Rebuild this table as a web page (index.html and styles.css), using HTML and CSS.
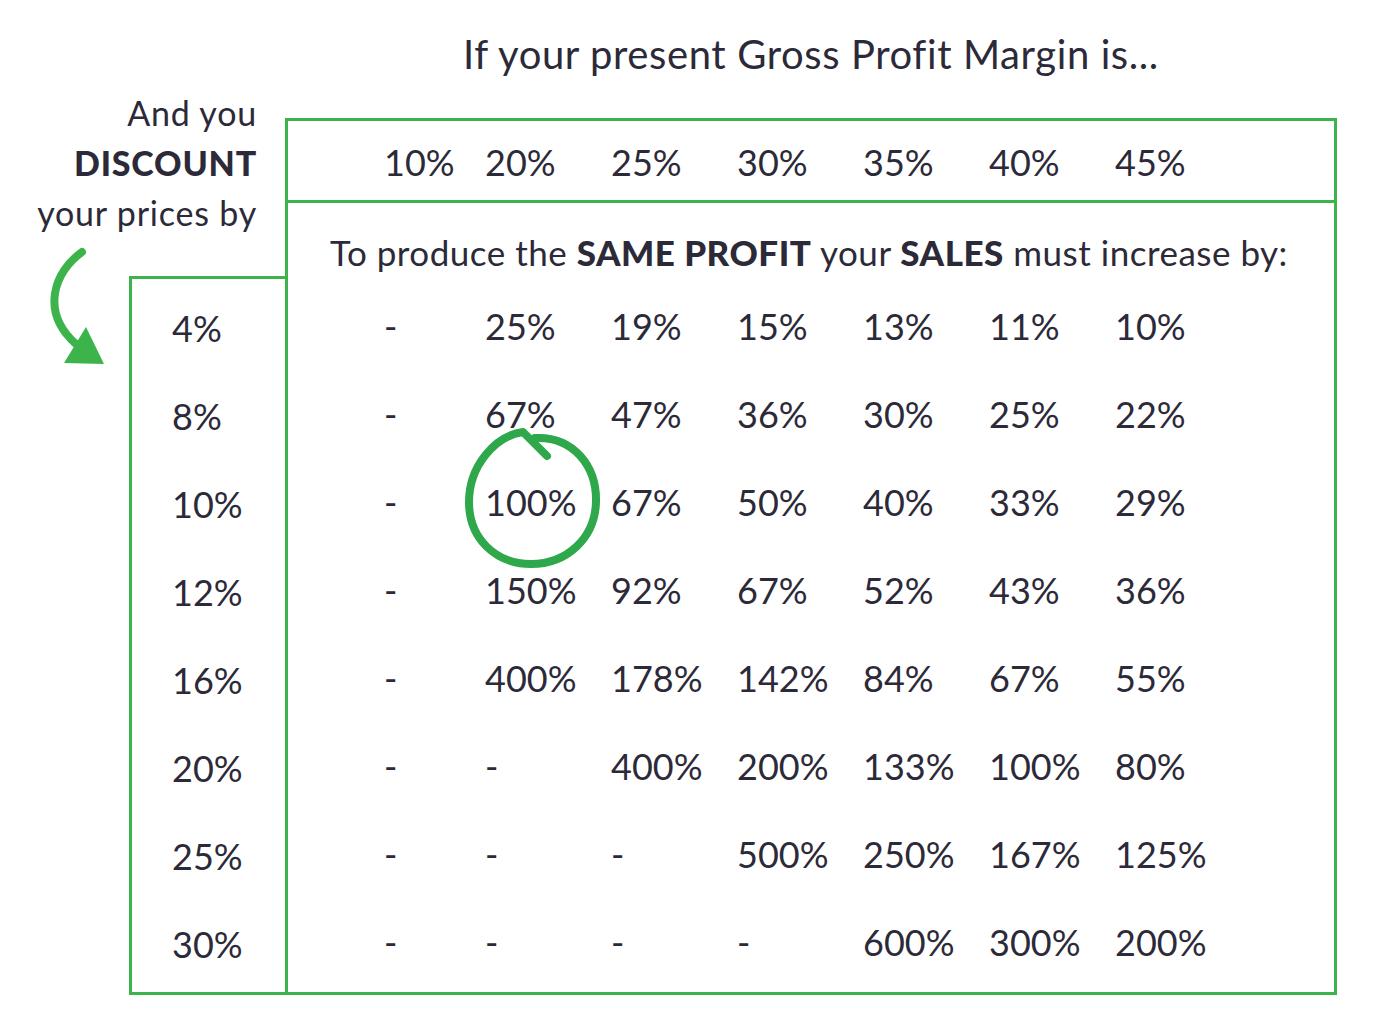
FILE: index.html
```html
<!DOCTYPE html>
<html lang="en">

<head>
    <meta charset="UTF-8">
    <title>Discount vs Sales Increase</title>
    <link rel="stylesheet" href="styles.css">
</head>

<body>
    <div class="sheet">
        <div class="side">
            <div class="side-label">
                <div>And you</div>
                <div class="strong">DISCOUNT</div>
                <div>your prices by</div>
            </div>
            <div class="side-body">
                <svg class="arrow" width="129" height="124" viewBox="0 0 129 124">
                    <path d="M82 6 C 54 26, 40 66, 76 98" fill="none" stroke="#3cb44b" stroke-width="8" stroke-linecap="round" />
                    <polygon points="64,117 104,118 86,81" fill="#3cb44b" />
                </svg>
                <div class="discount-box">
                    <div class="discount-row">4%</div>
                    <div class="discount-row">8%</div>
                    <div class="discount-row">10%</div>
                    <div class="discount-row">12%</div>
                    <div class="discount-row">16%</div>
                    <div class="discount-row">20%</div>
                    <div class="discount-row">25%</div>
                    <div class="discount-row">30%</div>
                </div>
            </div>
        </div>

        <div class="main">
            <div class="title">If your present Gross Profit Margin is...</div>
            <div class="table-box">
                <div class="margin-row cols">
                    <span>10%</span><span>20%</span><span>25%</span><span>30%</span><span>35%</span><span>40%</span><span>45%</span>
                </div>
                <div class="note">To produce the <b>SAME PROFIT</b> your <b>SALES</b> must increase by:</div>
                <div class="data">
                    <div class="cols"><span>-</span><span>25%</span><span>19%</span><span>15%</span><span>13%</span><span>11%</span><span>10%</span></div>
                    <div class="cols"><span>-</span><span>67%</span><span>47%</span><span>36%</span><span>30%</span><span>25%</span><span>22%</span></div>
                    <div class="cols">
                        <span>-</span>
                        <span class="circled">100%
                            <svg class="ring" width="150" height="150" viewBox="0 0 150 150">
                                <path d="M74 16 C 112 14, 136 44, 135 80 C 134 116, 106 142, 70 142 C 34 142, 8 116, 8 80 C 8 44, 34 14, 62 10 L 86 34" fill="none" stroke="#2ea84a" stroke-width="8" stroke-linecap="round" stroke-linejoin="round" />
                            </svg>
                        </span>
                        <span>67%</span><span>50%</span><span>40%</span><span>33%</span><span>29%</span>
                    </div>
                    <div class="cols"><span>-</span><span>150%</span><span>92%</span><span>67%</span><span>52%</span><span>43%</span><span>36%</span></div>
                    <div class="cols"><span>-</span><span>400%</span><span>178%</span><span>142%</span><span>84%</span><span>67%</span><span>55%</span></div>
                    <div class="cols"><span>-</span><span>-</span><span>400%</span><span>200%</span><span>133%</span><span>100%</span><span>80%</span></div>
                    <div class="cols"><span>-</span><span>-</span><span>-</span><span>500%</span><span>250%</span><span>167%</span><span>125%</span></div>
                    <div class="cols"><span>-</span><span>-</span><span>-</span><span>-</span><span>600%</span><span>300%</span><span>200%</span></div>
                </div>
            </div>
        </div>
    </div>
</body>

</html>
```

FILE: styles.css
```css
body {
    margin: 0;
    background-color: #ffffff;
    font-family: Lato, "Open Sans", sans-serif;
    color: #2c2a38;
}

.sheet {
    display: flex;
    width: 1400px;
    height: 1027px;
}

/* left column: label, arrow and discount list */
.side {
    width: 285px;
    flex: none;
    padding-top: 88px;
    box-sizing: border-box;
}

.side-label {
    text-align: right;
    padding-right: 28px;
    font-size: 34px;
    line-height: 50px;
    letter-spacing: 0.8px;
}

.side-label .strong {
    font-weight: 900;
    letter-spacing: 0.8px;
}

.side-body {
    display: flex;
    margin-top: 38px;
}

.arrow {
    display: block;
    flex: none;
    margin-top: -30px;
}

.discount-box {
    width: 156px;
    border: 3px solid #3cb44b;
    border-right: none;
    padding: 5px 0 4px;
    box-sizing: border-box;
}

.discount-row {
    height: 88px;
    display: flex;
    align-items: center;
    padding-left: 40px;
    font-size: 36px;
}

/* right column: the table */
.main {
    width: 1052px;
    flex: none;
}

.title {
    height: 118px;
    padding-top: 31px;
    box-sizing: border-box;
    text-align: center;
    font-size: 40px;
    line-height: 46px;
    letter-spacing: 0.6px;
}

.table-box {
    height: 877px;
    border: 3px solid #3cb44b;
    box-sizing: border-box;
}

.cols {
    display: grid;
    grid-template-columns: 101px repeat(6, 126px);
    align-items: center;
    padding-left: 96px;
    font-size: 36px;
}

.margin-row {
    height: 82px;
    border-bottom: 3px solid #3cb44b;
    box-sizing: border-box;
    padding-top: 2px;
}

.note {
    margin: 27px 0 10px;
    height: 44px;
    line-height: 44px;
    padding-left: 42px;
    font-size: 35px;
    letter-spacing: 0.5px;
}

.note b {
    font-weight: 900;
}

.data .cols {
    height: 88px;
}

.data .cols span {
    position: relative;
    top: -2px;
}

.circled {
    position: relative;
}

.ring {
    position: absolute;
    left: -24px;
    top: -58px;
    pointer-events: none;
}
```
